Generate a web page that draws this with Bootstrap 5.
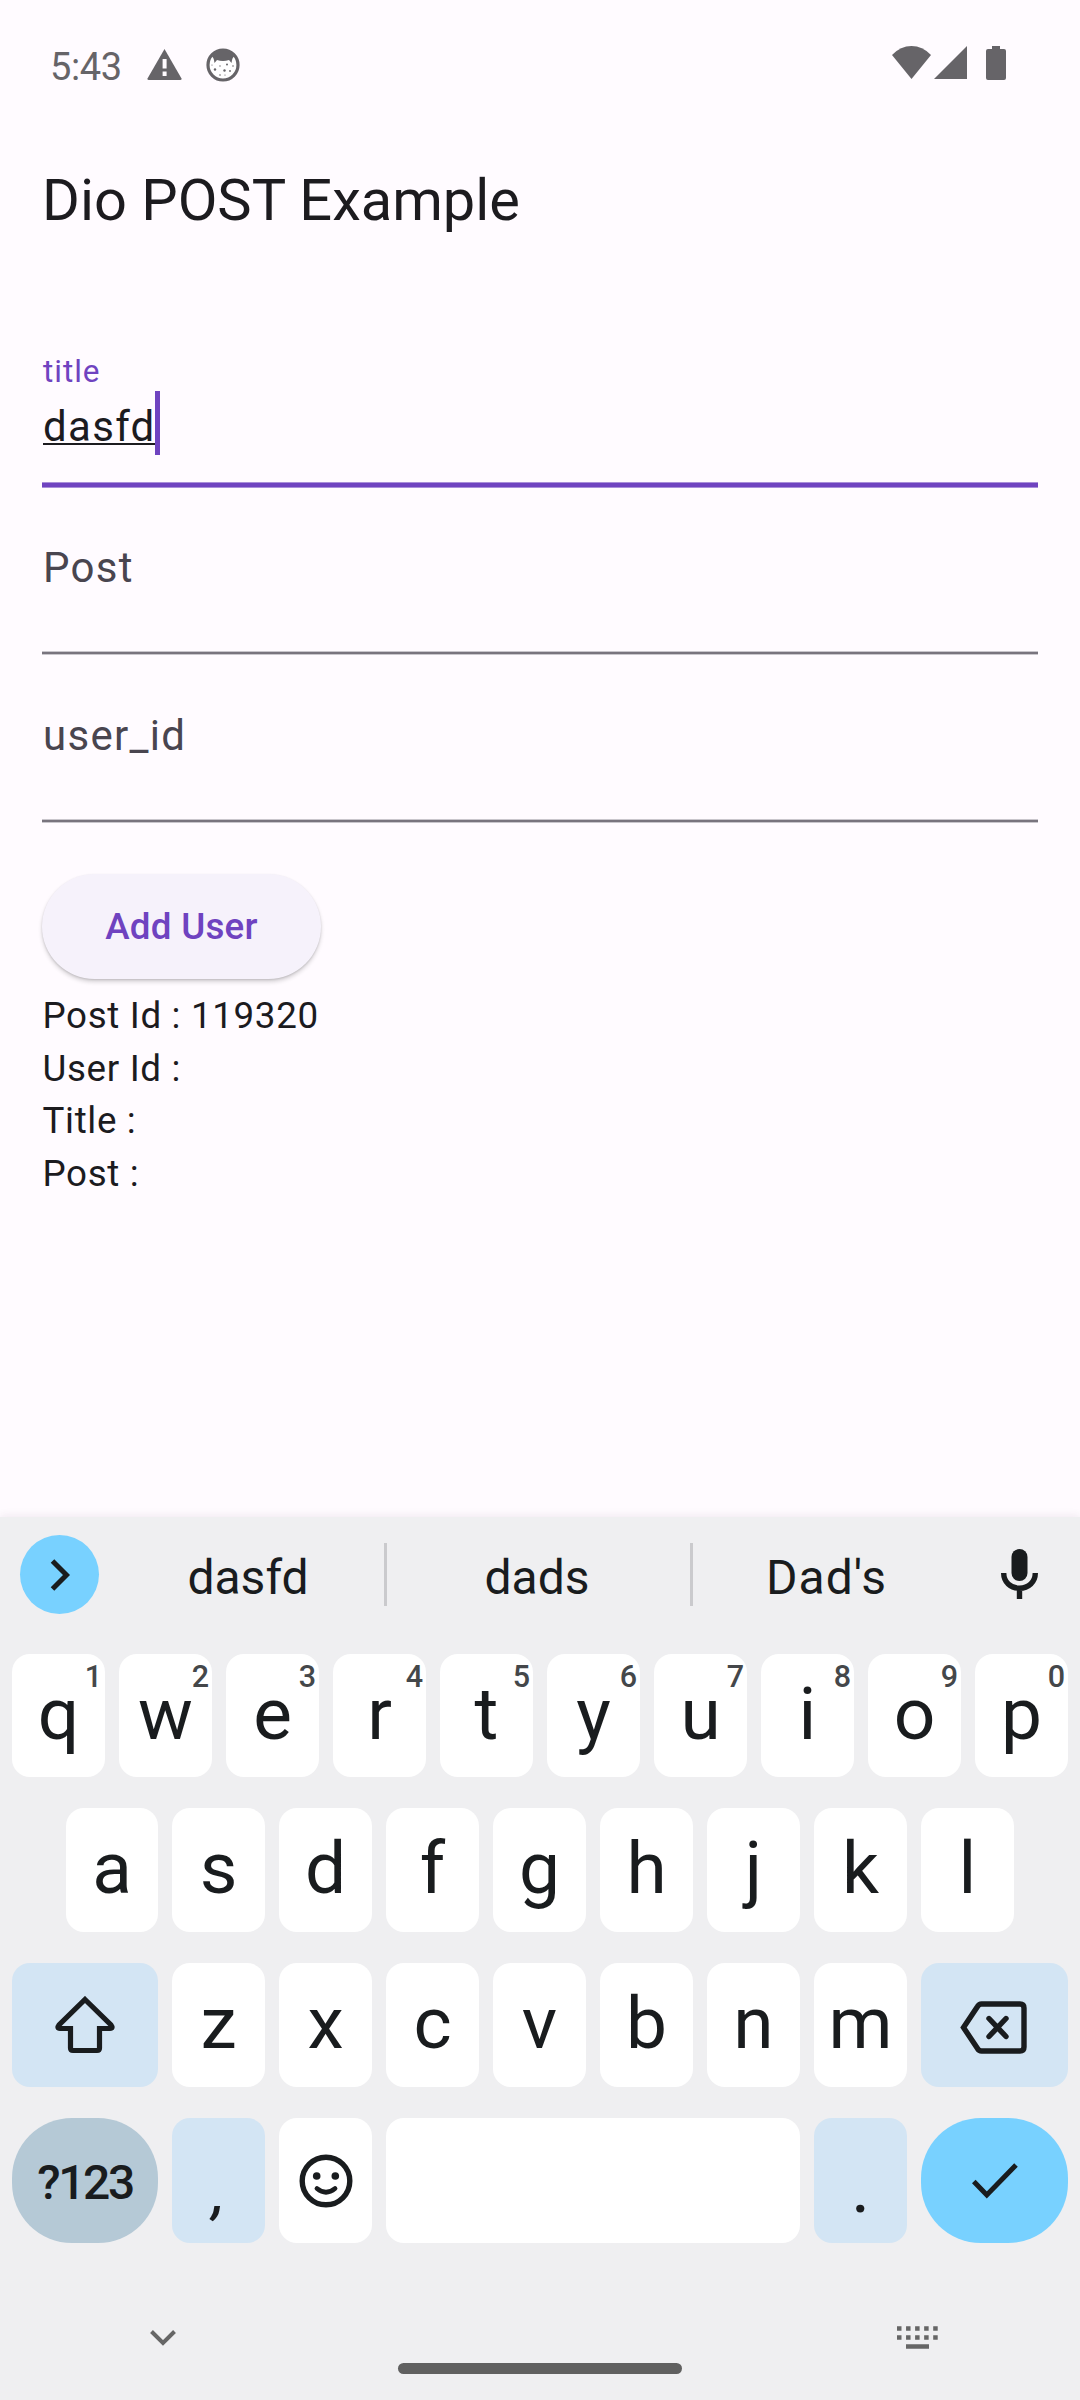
<!DOCTYPE html>
<html lang="en">
<head>
<meta charset="utf-8">
<meta name="viewport" content="width=device-width, initial-scale=1">
<title>Dio POST Example</title>
<link href="https://cdn.jsdelivr.net/npm/bootstrap@5.3.0/dist/css/bootstrap.min.css" rel="stylesheet">
<style>
  body { background: #fffbff; color: #1c1b1f; font-family: Roboto, "Liberation Sans", sans-serif; height: 2400px; overflow: hidden; }
  svg { display: block; flex: none; }
  .statusbar { height: 133px; padding: 0 74px 0 50px; color: #666468; }
  .status-icon { margin-bottom: 4px; }
  .clock { font-size: 38px; line-height: 44px; width: 97px; letter-spacing: -.4px; }
  .appbar { height: 147px; padding: 0 42px 13px; }
  .appbar h1 { font-size: 57.75px; font-weight: 400; line-height: 72px; }
  .form-area { padding: 70px 42px 0; }
  .field { height: 167px; font-size: 42px; letter-spacing: 1.31px; color: #49454f; }
  .field-label { padding: 47px 0 0 1px; line-height: 66px; }
  .field.last-field { height: 168px; }
  .last-field .field-label { padding-top: 48px; }
  .field.focused { height: 138px; color: #1c1b1f; }
  .focused .field-label { padding: 1px 0 0 1px; height: 42px; color: #6f43c0; font-size: 31.5px; letter-spacing: .98px; line-height: 42px; }
  .typed { padding-left: 1px; line-height: 70px; height: 68px; text-decoration: underline; text-decoration-thickness: 2px; text-underline-offset: 2px; text-decoration-skip-ink: none; }
  .caret { width: 5px; height: 64px; background: #6f43c0; margin: -1px 0 0 -1px; }
  .rule { height: 4px; background: linear-gradient(#c9c6cc 1px, #79747e 1px 3px, #c9c6cc 3px); }
  .focused .rule { height: 6px; background: linear-gradient(#a98fd9 1px, #6f43c0 1px 5px, #a98fd9 5px); }
  .btn-add { margin-top: 51px; width: 279px; height: 105px; background: #f6f2fb; color: #6f43c0; font-size: 36.75px; font-weight: 500; letter-spacing: .26px; box-shadow: 0 3px 4px rgba(0,0,0,.16), 0 1px 2px rgba(0,0,0,.12); border: 0; padding: 0; }
  .result { margin-top: 11px; padding-left: .5px; font-size: 36.75px; line-height: 52.5px; letter-spacing: .656px; }
  .keyboard { height: 883px; background: #efeff1; color: #191c1e; box-shadow: 0 -2px 8px rgba(60,20,60,.07); }
  .strip { height: 137px; padding: 18px 0 0 20px; }
  .expand { width: 79px; height: 79px; background: #78d1ff; border-radius: 40px; }
  .word { width: 303px; font-size: 48px; line-height: 82px; padding: 2px 3px 0 0; }
  .word.first { width: 272px; margin-left: 13px; padding-right: 0; }
  .word.last { width: 268px; padding-right: 1px; letter-spacing: 1px; }
  .bar { width: 3px; height: 63px; margin-top: 8px; background: #cacacd; }
  .keys { gap: 14px; padding: 0 12px; margin-bottom: 31px; height: 123px; }
  .keys.tall { height: 124px; }
  .keys.foot { height: 125px; }
  .tile { width: 93px; flex: none; background: #fff; border-radius: 18px; font-size: 73px; line-height: 121px; text-align: center; position: relative; }
  .hint { position: absolute; top: 7px; right: 3px; font-size: 30.5px; line-height: 31px; font-weight: 500; color: #44474a; }
  .inset { padding-left: 66px; }
  .inset .tile:first-child { width: 92px; }
  .wide { width: 146px; }
  .wide:last-child { width: 147px; }
  .soft { background: #d3e5f4; }
  .pill-key { border-radius: 60px; }
  .mode { background: #b5c9d6; font-size: 48px; font-weight: 500; letter-spacing: -2.4px; line-height: 129px; }
  .mark-key { line-height: 138px; }
  .comma-key { font-size: 56px; font-style: italic; font-weight: 500; line-height: 150px; }
  .enter { background: #78d1ff; }
  .navrow { color: #666; padding: 52px 142px 0 150px; }
  .handle { width: 284px; height: 11px; border-radius: 6px; background: #606060; margin-top: 14px; }
</style>
<script src="https://cdn.jsdelivr.net/npm/bootstrap@5.3.0/dist/js/bootstrap.bundle.min.js"></script>
</head>
<body class="d-flex flex-column">
  <header>
    <div class="statusbar d-flex align-items-center">
      <span class="clock">5:43</span>
      <svg class="status-icon" width="35" height="31" viewBox="0 0 35 31"><path d="M17.500 0 34.500 29.500Q35 31 33 31H2Q0 31 .5 29.500Z" fill="currentColor"/><path d="M15.600 10h4v9.500h-4zM15.600 22.500h4v4.500h-4z" fill="#fffbff"/></svg>
      <svg class="ms-4 status-icon" width="34" height="34" viewBox="0 0 34 34"><circle cx="17" cy="17" r="15" fill="#fff" stroke="currentColor" stroke-width="3.200"/><path d="M5 8Q10 1 17 1T29 8Q26 9 25.500 15L23 12Q17 14 11 12L8.500 15Q8 9 5 8Z" fill="currentColor"/><g fill="currentColor"><circle cx="9" cy="21.500" r="1.200"/><circle cx="14" cy="18" r=".7"/><circle cx="18.500" cy="22.500" r="1.200"/><circle cx="21" cy="16.500" r="1"/><circle cx="27" cy="18" r=".8"/><circle cx="24" cy="23" r=".9"/><circle cx="14" cy="27" r=".8"/><circle cx="19" cy="27" r=".6"/><circle cx="6" cy="17" r=".6"/></g></svg>
      <div class="d-flex ms-auto mb-1 pb-1">
        <svg width="39" height="33" viewBox="0 0 39 33"><path d="M0 9Q8.500 0 19.500 0T39 9L19.500 33Z" fill="currentColor"/></svg>
        <svg width="33" height="33" viewBox="0 0 33 33" style="margin-left:3px"><path d="M33 0V33H0Z" fill="currentColor"/></svg>
        <svg width="20" height="34" viewBox="0 0 20 34" style="margin-left:19px"><path d="M6 0h8v3h4q2 0 2 2v27q0 2-2 2H2q-2 0-2-2V5q0-2 2-2h4Z" fill="currentColor"/></svg>
      </div>
    </div>
    <div class="appbar d-flex align-items-center"><h1 class="m-0">Dio POST Example</h1></div>
  </header>

  <main class="form-area">
    <div class="field focused d-flex flex-column">
      <div class="field-label">title</div>
      <div class="d-flex"><span class="typed">dasfd</span><span class="caret"></span></div>
      <div class="rule mt-auto"></div>
    </div>
    <div class="field d-flex flex-column"><div class="field-label">Post</div><div class="rule mt-auto"></div></div>
    <div class="field last-field d-flex flex-column"><div class="field-label">user_id</div><div class="rule mt-auto"></div></div>
    <button type="button" class="btn btn-add rounded-pill d-block">Add User</button>
    <div class="result">
      <div>Post Id : 119320</div>
      <div>User Id :</div>
      <div>Title :</div>
      <div>Post :</div>
    </div>
  </main>

  <section class="keyboard mt-auto">
    <div class="strip d-flex align-items-start text-center">
      <div class="expand d-flex align-items-center justify-content-center"><svg width="20" height="32" viewBox="0 0 20 32"><path d="M2.500 2 16.500 16 2.500 30" fill="none" stroke="currentColor" stroke-width="5"/></svg></div>
      <div class="word first">dasfd</div>
      <div class="bar"></div>
      <div class="word">dads</div>
      <div class="bar"></div>
      <div class="word last">Dad's</div>
      <svg width="37" height="50" viewBox="0 0 37 50" style="margin:14px 0 0 40px"><rect x="10.500" y="0" width="16" height="32" rx="8" fill="currentColor"/><path d="M2.700 24C2.700 33 9.500 39.200 18.500 39.200S34.300 33 34.300 24M18.500 39V50" fill="none" stroke="currentColor" stroke-width="5.400"/></svg>
    </div>
    <div class="keys d-flex">
      <div class="tile">q<span class="hint">1</span></div><div class="tile">w<span class="hint">2</span></div><div class="tile">e<span class="hint">3</span></div><div class="tile">r<span class="hint">4</span></div><div class="tile">t<span class="hint">5</span></div><div class="tile">y<span class="hint">6</span></div><div class="tile">u<span class="hint">7</span></div><div class="tile">i<span class="hint">8</span></div><div class="tile">o<span class="hint">9</span></div><div class="tile">p<span class="hint">0</span></div>
    </div>
    <div class="keys tall inset d-flex">
      <div class="tile">a</div><div class="tile">s</div><div class="tile">d</div><div class="tile">f</div><div class="tile">g</div><div class="tile">h</div><div class="tile">j</div><div class="tile">k</div><div class="tile">l</div>
    </div>
    <div class="keys tall d-flex">
      <div class="tile wide soft d-flex align-items-center justify-content-center"><svg width="60" height="58" viewBox="0 0 60 58"><path d="M30 3.500 56 29Q58.500 32.500 55 32.500H44.500V52Q44.500 54.500 42 54.500H18Q15.500 54.500 15.500 52V32.500H5Q1.500 32.500 4 29Z" fill="none" stroke="currentColor" stroke-width="5.200"/></svg></div>
      <div class="tile">z</div><div class="tile">x</div><div class="tile">c</div><div class="tile">v</div><div class="tile">b</div><div class="tile">n</div><div class="tile">m</div>
      <div class="tile wide soft d-flex align-items-center justify-content-center"><svg width="68" height="53" viewBox="0 0 68 53" style="margin:5px 2px 0 0"><path d="M21.500 3H60Q64 3 64 7V46Q64 50 60 50H21.500Q19 50 17.500 47.500L3.500 26.500 17.500 5.500Q19 3 21.500 3ZM29 17.500 46 35.500M46 17.500 29 35.500" fill="none" stroke="currentColor" stroke-width="5.400" stroke-linecap="round"/></svg></div>
    </div>
    <div class="keys foot d-flex">
      <div class="tile wide pill-key mode">?123</div>
      <div class="tile soft comma-key">,</div>
      <div class="tile d-flex align-items-center justify-content-center"><svg width="54" height="54" viewBox="0 0 54 54"><circle cx="27" cy="27" r="23.800" fill="none" stroke="currentColor" stroke-width="5.400"/><circle cx="17.700" cy="22" r="3.800" fill="currentColor"/><circle cx="36.300" cy="22" r="3.800" fill="currentColor"/><path d="M18 34.500Q27 42 36 34.500" fill="none" stroke="currentColor" stroke-width="4.800" stroke-linecap="round"/></svg></div>
      <div class="tile flex-fill"></div>
      <div class="tile soft mark-key">.</div>
      <div class="tile wide pill-key enter d-flex align-items-center justify-content-center"><svg width="46" height="36" viewBox="0 0 46 36"><path d="M1.800 18.500 14.800 32 44 2" fill="none" stroke="currentColor" stroke-width="5"/></svg></div>
    </div>
    <div class="navrow d-flex justify-content-between">
      <svg width="26" height="17" viewBox="0 0 26 17" style="margin-top:4px"><path d="M1.500 1.500 13 13 24.500 1.500" fill="none" stroke="currentColor" stroke-width="4"/></svg>
      <svg width="41" height="23" viewBox="0 0 41 23"><path d="M0 2.500H41M0 11.500H41" stroke="currentColor" stroke-width="4.500" stroke-dasharray="4.500 4.550"/><path d="M9 20.500H32" stroke="currentColor" stroke-width="4.500"/></svg>
    </div>
    <div class="handle mx-auto"></div>
  </section>
</body>
</html>
